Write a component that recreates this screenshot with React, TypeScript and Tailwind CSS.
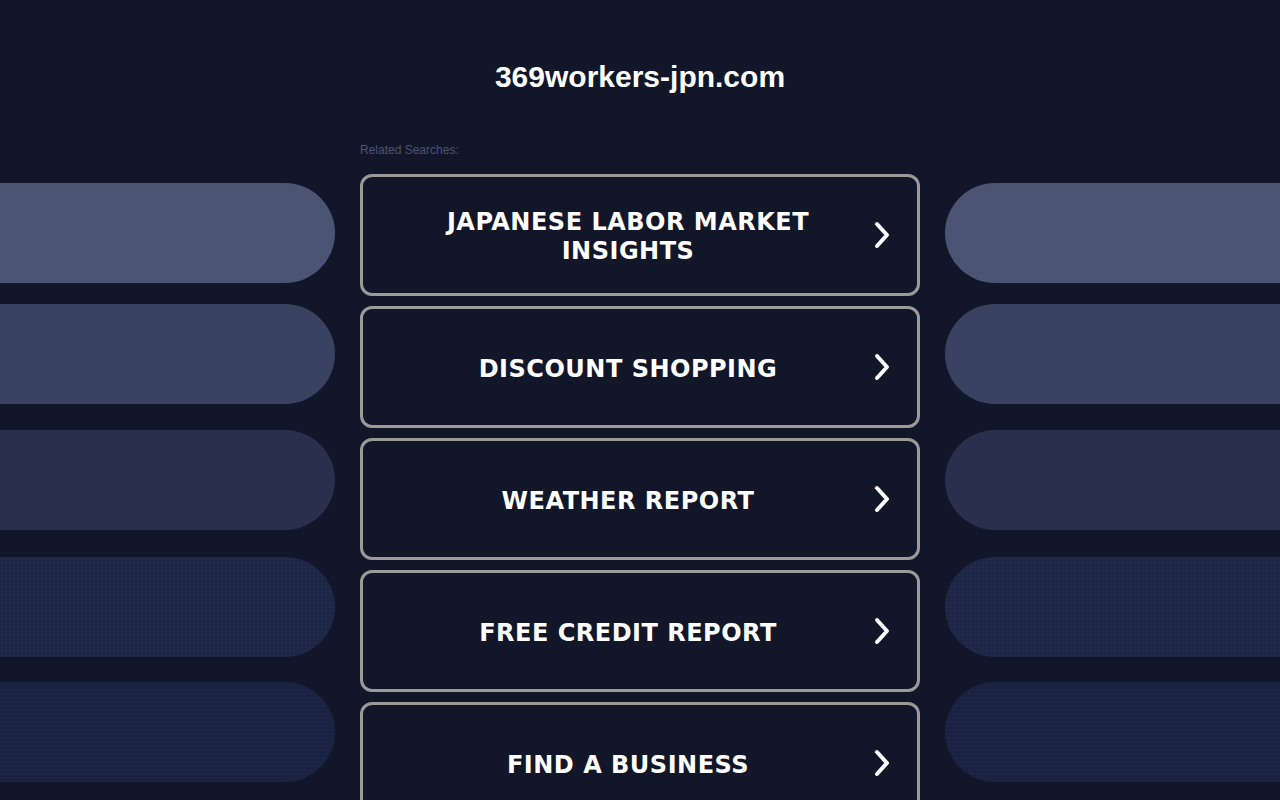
const searches = [
  "JAPANESE LABOR MARKET INSIGHTS",
  "DISCOUNT SHOPPING",
  "WEATHER REPORT",
  "FREE CREDIT REPORT",
  "FIND A BUSINESS",
];

const pills = [
  "mt-0 bg-[#4b5573]",
  "mt-[21px] bg-[#394260]",
  "mt-[26px] bg-[#28304e]",
  "mt-[27px] bg-[#1e2646] bg-[radial-gradient(circle,#242d52_0.6px,transparent_0.9px)] bg-[length:4px_4px]",
  "mt-[25px] bg-[#1c2445] bg-[radial-gradient(circle,#171e3a_0.6px,transparent_0.9px)] bg-[length:4px_4px]",
];

function Chevron() {
  return (
    <svg width="24" height="30" viewBox="0 0 24 30" className="shrink-0">
      <path
        d="M8 4 L18 15 L8 26"
        fill="none"
        stroke="#ffffff"
        strokeWidth="4"
        strokeLinecap="round"
        strokeLinejoin="round"
      />
    </svg>
  );
}

export default function App() {
  return (
    <div className="min-h-screen w-full overflow-hidden bg-[#111729]">
      <h1 className="pt-[61px] text-center text-[30px] leading-[32px] font-bold text-white font-['Liberation_Sans',Arial,sans-serif]">
        369workers-jpn.com
      </h1>

      <div className="mt-[50px] grid grid-cols-[335px_560px_335px] gap-x-[25px]">
        {/* left decorative pills */}
        <div className="flex flex-col pt-[40px]">
          {pills.map((p, i) => (
            <div key={i} className={`h-[100px] rounded-r-full ${p}`} />
          ))}
        </div>

        <div className="flex flex-col">
          <p className="mb-[17px] text-[12px] leading-[14px] text-[#4a5476] font-['Liberation_Sans',Arial,sans-serif]">
            Related Searches:
          </p>
          <div className="flex flex-col gap-[10px]">
            {searches.map((s) => (
              <a
                key={s}
                href="#"
                className="flex h-[122px] items-center rounded-[12px] border-[3px] border-[#9a9a9a] bg-[#111729] px-6"
              >
                <span className="flex-1 pt-[4px] text-center text-[24px] leading-[29px] font-bold tracking-[0.5px] text-white font-['DejaVu_Sans',Verdana,sans-serif]">
                  {s}
                </span>
                <Chevron />
              </a>
            ))}
          </div>
        </div>

        {/* right decorative pills */}
        <div className="flex flex-col pt-[40px]">
          {pills.map((p, i) => (
            <div key={i} className={`h-[100px] rounded-l-full ${p}`} />
          ))}
        </div>
      </div>
    </div>
  );
}
